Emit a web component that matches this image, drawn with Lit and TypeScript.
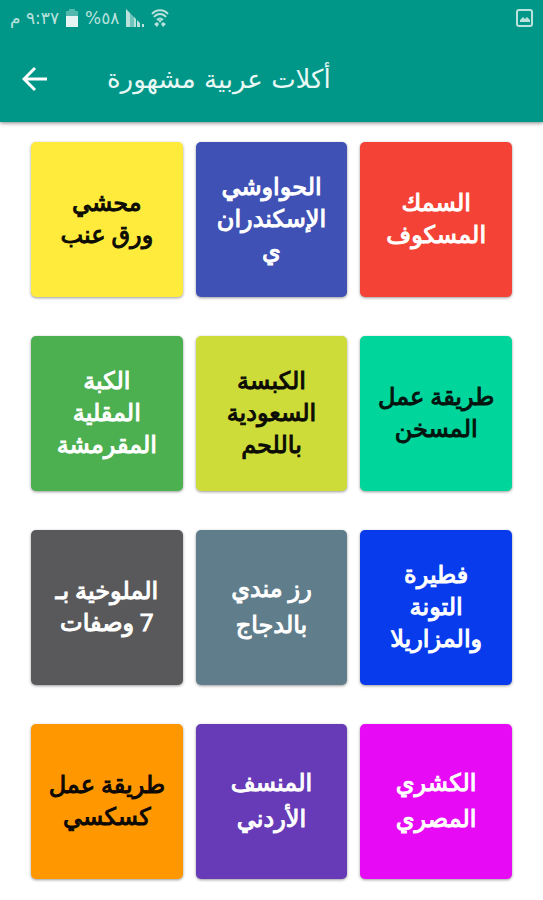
import { LitElement, html, css } from "lit";
import { customElement, property } from "lit/decorators.js";

type Dish = { lines: string[]; tone: string; loose?: boolean };

const DISHES: Dish[] = [
  { lines: ["محشي", "ورق عنب"], tone: "yellow" },
  { lines: ["الحواوشي", "الإسكندران", "ي"], tone: "indigo" },
  { lines: ["السمك", "المسكوف"], tone: "red" },
  { lines: ["الكبة", "المقلية", "المقرمشة"], tone: "green" },
  { lines: ["الكبسة", "السعودية", "باللحم"], tone: "lime" },
  { lines: ["طريقة عمل", "المسخن"], tone: "mint" },
  { lines: ["الملوخية بـ", "7 وصفات"], tone: "gray" },
  { lines: ["رز مندي", "بالدجاج"], tone: "slate", loose: true },
  { lines: ["فطيرة", "التونة", "والمزاريلا"], tone: "blue" },
  { lines: ["طريقة عمل", "كسكسي"], tone: "orange" },
  { lines: ["المنسف", "الأردني"], tone: "purple", loose: true },
  { lines: ["الكشري", "المصري"], tone: "magenta", loose: true },
];

@customElement("status-bar")
export class StatusBar extends LitElement {
  static styles = css`
    :host {
      display: flex;
      align-items: center;
      height: 36px;
      padding: 0 9px 0 10px;
      color: #b9e2dd;
      font: 17px/24px "DejaVu Sans", sans-serif;
    }
    .group { display: flex; align-items: center; gap: 7px; flex: 1; }
    svg { display: block; fill: currentColor; }
  `;
  render() {
    return html`
      <div class="group">
        <span dir="rtl">٩:٣٧ م</span>
        <svg width="12" height="18" viewBox="0 0 12 18">
          <path d="M3 0h6v2h3v6H0V2h3z" opacity=".45" />
          <path d="M0 7h12v11H0z" fill="#e6f5f3" />
        </svg>
        <span dir="rtl">٥٨%</span>
        <svg width="18" height="18" viewBox="0 0 18 18">
          <path d="M0 0l4 4v14H0z" />
          <path d="M4 4l4 4v10H4z" opacity=".6" />
          <path d="M8 8l2 2v8H8zM11 11l3 3v4h-3zM16 15h2v3h-2z" />
        </svg>
        <svg width="18" height="18" viewBox="0 0 18 18">
          <g fill="none" stroke="currentColor" stroke-width="2">
            <path d="M1 5C5 0 13 0 17 5M3 8c3-4 9-4 12 0M6 11c2-2 4-2 6 0" />
          </g>
          <path d="M7 11h4l-2 3zM3 15l3-2 2 2-2 3zM10 15l2-2 3 2-3 3z" />
        </svg>
      </div>
      <svg width="18" height="18" viewBox="0 0 18 18">
        <rect x="1" y="1" width="15" height="16" rx="2" fill="none" stroke="currentColor" stroke-width="2" />
        <path d="M4 13v-2l3-3 2 2 2-2 3 3v2z" />
      </svg>
    `;
  }
}

@customElement("dish-tile")
export class DishTile extends LitElement {
  @property({ attribute: false }) dish!: Dish;
  static styles = css`
    :host { display: block; }
    .tile {
      display: flex;
      flex-direction: column;
      align-items: center;
      justify-content: center;
      width: 100%;
      height: 155px;
      padding: 0 0 2px;
      border: 0;
      border-radius: 5px;
      box-shadow: 0 1px 3px rgba(0, 0, 0, 0.4);
      color: #fff;
      font: 24px/32px Roboto, "DejaVu Sans", sans-serif;
      -webkit-text-stroke: 1px currentColor;
      cursor: pointer;
    }
    .line { display: block; white-space: nowrap; }
    .loose { line-height: 36px; }
    .yellow { background: #ffeb3b; color: #0c0c04; }
    .indigo { background: #3f51b5; }
    .red { background: #f44336; }
    .green { background: #4caf50; }
    .lime { background: #cddc39; color: #0c0c04; }
    .mint { background: #00d59b; color: #04140f; }
    .gray { background: #59595b; }
    .slate { background: #607d8b; }
    .blue { background: #073bec; }
    .orange { background: #ff9800; color: #0c0804; }
    .purple { background: #673ab7; }
    .magenta { background: #e60af5; }
  `;
  render() {
    const { lines, tone, loose } = this.dish;
    return html`<button class="tile ${tone} ${loose ? "loose" : ""}" dir="rtl">
      ${lines.map((l) => html`<span class="line">${l}</span>`)}
    </button>`;
  }
}

@customElement("app-root")
export class AppRoot extends LitElement {
  static styles = css`
    :host { display: block; min-height: 100vh; background: #fff; }
    .top {
      background: #009688;
      box-shadow: 0 1px 4px rgba(0, 0, 0, 0.5);
    }
    .bar { display: flex; align-items: center; gap: 60px; height: 86px; padding: 0 22px; }
    .back { display: block; padding: 0; border: 0; background: none; color: #fff; cursor: pointer; }
    .back svg { display: block; }
    .title { margin: 0; color: #e8f8f5; font: 26px/36px "DejaVu Sans", sans-serif; }
    .grid {
      display: grid;
      grid-template-columns: repeat(3, 1fr);
      gap: 39px 13px;
      padding: 20px 31px;
    }
  `;
  render() {
    return html`
      <header class="top">
        <status-bar></status-bar>
        <div class="bar">
          <button class="back" aria-label="رجوع">
            <svg width="25" height="26" viewBox="0 0 25 26" fill="none" stroke="currentColor" stroke-width="3">
              <path d="M25 13H2M13 2L2 13l11 11" />
            </svg>
          </button>
          <h1 class="title" dir="rtl">أكلات عربية مشهورة</h1>
        </div>
      </header>
      <main class="grid">
        ${DISHES.map((d) => html`<dish-tile .dish=${d}></dish-tile>`)}
      </main>
    `;
  }
}
